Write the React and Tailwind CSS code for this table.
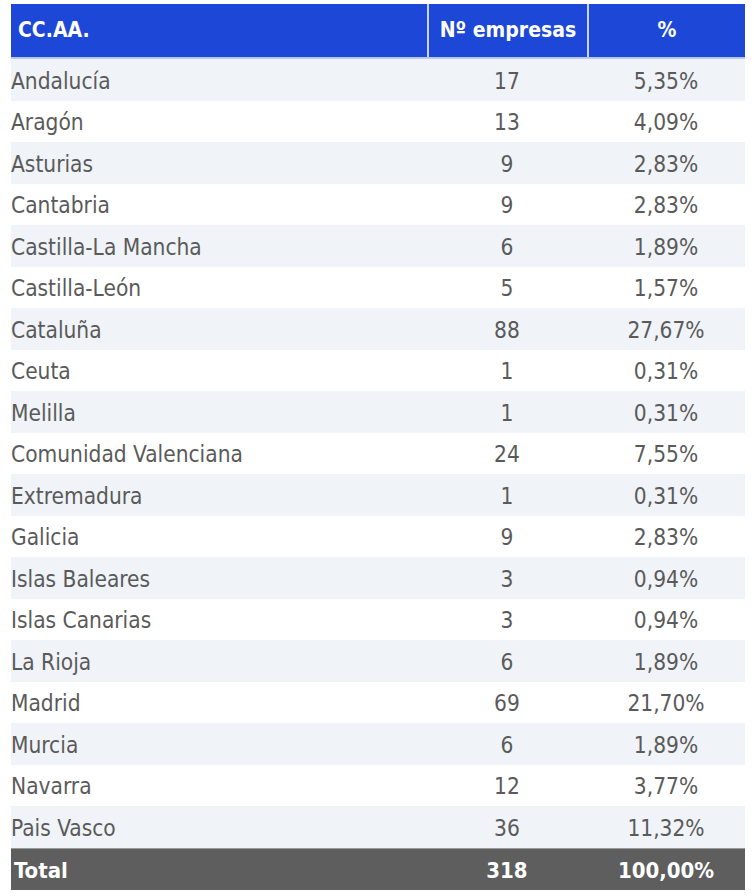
const rows = [
  ["Andalucía", "17", "5,35%"],
  ["Aragón", "13", "4,09%"],
  ["Asturias", "9", "2,83%"],
  ["Cantabria", "9", "2,83%"],
  ["Castilla-La Mancha", "6", "1,89%"],
  ["Castilla-León", "5", "1,57%"],
  ["Cataluña", "88", "27,67%"],
  ["Ceuta", "1", "0,31%"],
  ["Melilla", "1", "0,31%"],
  ["Comunidad Valenciana", "24", "7,55%"],
  ["Extremadura", "1", "0,31%"],
  ["Galicia", "9", "2,83%"],
  ["Islas Baleares", "3", "0,94%"],
  ["Islas Canarias", "3", "0,94%"],
  ["La Rioja", "6", "1,89%"],
  ["Madrid", "69", "21,70%"],
  ["Murcia", "6", "1,89%"],
  ["Navarra", "12", "3,77%"],
  ["Pais Vasco", "36", "11,32%"],
];

export default function App() {
  return (
    <div
      className="bg-white w-[754px] h-[896px] pt-[4px] pl-[11px]"
      style={{ fontFamily: '"DejaVu Sans Condensed", "Liberation Sans", sans-serif' }}
    >
      <div className="w-[734px]">
        {/* Header */}
        <div className="flex h-[55px] bg-[#1d47d6] text-white font-bold text-[21px] border-b-2 border-[#b9c6f0]">
          <div className="w-[416px] flex items-center pl-[7px]">CC.AA.</div>
          <div className="w-[160px] flex items-center justify-center border-l-2 border-[#c9d3f3]">
            Nº empresas
          </div>
          <div className="flex-1 flex items-center justify-center border-l-2 border-[#c9d3f3]">%</div>
        </div>

        {/* Body */}
        {rows.map(([name, n, pct], i) => (
          <div
            key={name}
            className={
              "flex h-[41.5px] items-center pt-[4px] text-[22.5px] text-[#5a5a5a] " +
              (i % 2 === 0 ? "bg-[#f0f3f7]" : "bg-white")
            }
          >
            <div className="w-[416px]">{name}</div>
            <div className="w-[160px] text-center">{n}</div>
            <div className="flex-1 text-center">{pct}</div>
          </div>
        ))}

        {/* Total */}
        <div className="flex h-[42px] items-center pt-[3px] bg-[#5e5e5e] text-white text-[22px] font-bold border-t border-[#9a9a9a]">
          <div className="w-[416px] pl-[3px]">Total</div>
          <div className="w-[160px] text-center">318</div>
          <div className="flex-1 text-center">100,00%</div>
        </div>
      </div>
    </div>
  );
}
